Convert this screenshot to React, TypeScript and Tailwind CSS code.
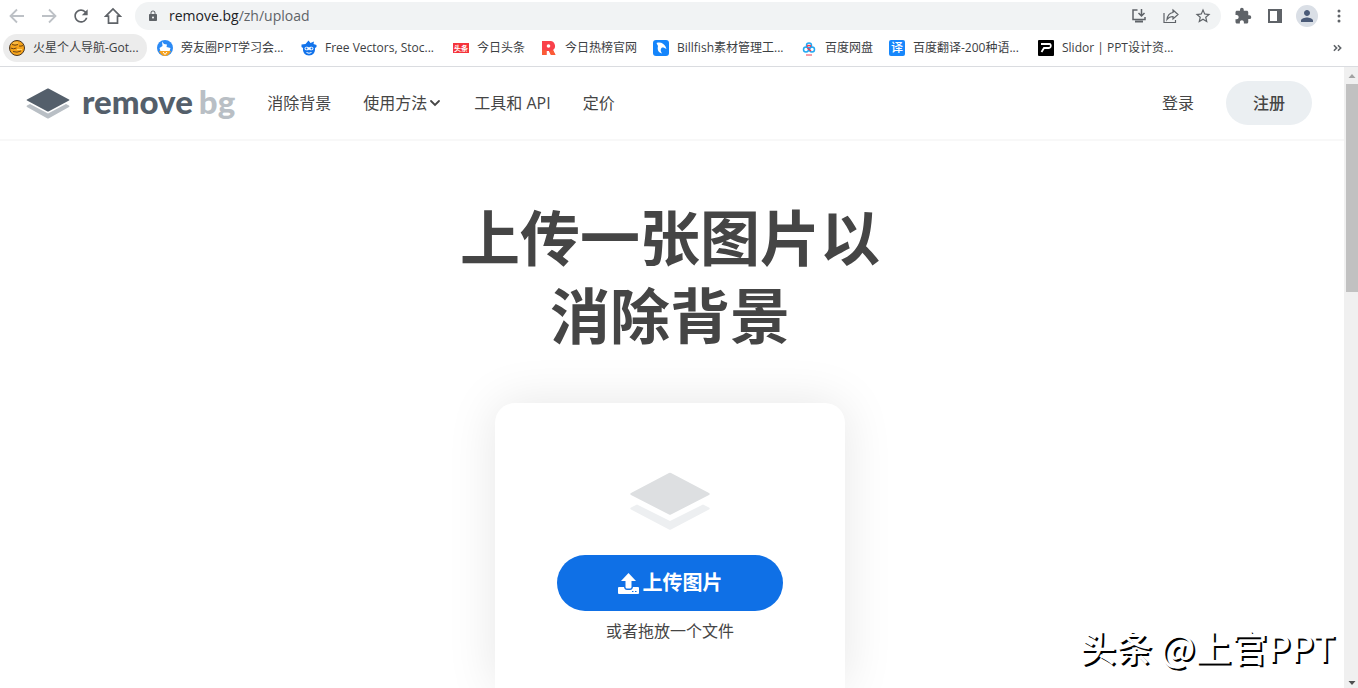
import React from 'react';
import { MdExtension, MdLock, MdPerson, MdRefresh, MdStarOutline } from 'react-icons/md';

interface Bookmark {
    title: string;
    width: string;
    active?: boolean;
    icon: React.ReactNode;
}

const bookmarks: Bookmark[] = [
    {
        title: '火星个人导航-Got...',
        width: 'w-[144px]',
        active: true,
        icon: (
            <>
                <circle cx="8" cy="8" r="7.5" fill="#f5a31b" stroke="#4a3621" strokeWidth="1" />
                <path d="M3 4.500q3 1.500 6 0M10 6q2 .5 4-.5M1.500 8q3 1.500 6 0M4 11.500q4 1.500 8-.5" stroke="#6b4312" strokeWidth="1" fill="none" />
                <path d="M4 3h5M8 9.500h5" stroke="#ffd36b" strokeWidth="1" />
            </>
        ),
    },
    {
        title: '旁友圈PPT学习会...',
        width: 'w-[140px]',
        icon: (
            <>
                <circle cx="8" cy="8" r="8" fill="#2b8af5" />
                <path d="M5 1.500l2 2.500 3 .5L9.500 7l4 1-1 3.500H3.500L2.500 8 5.500 6z" fill="#fff" />
                <path d="M2 11h12q-2 5-6 5t-6-5z" fill="#f6a11c" />
                <path d="M6 12l2 2.500 2-2.500" stroke="#fff" fill="none" />
            </>
        ),
    },
    {
        title: 'Free Vectors, Stoc...',
        width: 'w-[148px]',
        icon: (
            <>
                <path d="M.5 4.500l4-.5L7.500.5l2 2.500L13 1.500l-.5 2.500 3 1v2l-1.500 1c.5 4.500-2 7.500-6 7.500S1.500 12.500 2 8L.5 7z" fill="#1273eb" />
                <path d="M3.500 8.500c0-2 3.500-2.500 4.500-1 1-1.500 4.500-1 4.500 1s-3.500 2.500-4.500 1c-1 1.500-4.500 1-4.500-1z" fill="#fff" />
                <circle cx="5.500" cy="8.500" r="1" fill="#1273eb" />
                <circle cx="10.500" cy="8.500" r="1" fill="#1273eb" />
                <path d="M5.500 12.500q2.500 1.500 5 0" stroke="#fff" fill="none" />
            </>
        ),
    },
    {
        title: '今日头条',
        width: 'w-[84px]',
        icon: (
            <>
                <rect y="3" width="16" height="10" fill="#f5333b" />
                <text x="8" y="11" fill="#fff" fontSize="7" fontWeight="700" textAnchor="middle">头条</text>
            </>
        ),
    },
    {
        title: '今日热榜官网',
        width: 'w-[108px]',
        icon: (
            <>
                <path d="M1 1h8.500a5 5 0 0 1 2.500 9l2.500 5H10l-2-4H5.500v4H1z" fill="#f9414b" />
                <path d="M1 10h4.500v5H1zM8 11l4-1 2.500 5H10z" fill="#fb5b36" />
                <circle cx="7.500" cy="6" r="1.800" fill="#fff" />
            </>
        ),
    },
    {
        title: 'Billfish素材管理工...',
        width: 'w-[144px]',
        icon: (
            <>
                <rect width="16" height="16" rx="3" fill="#1585fb" />
                <path d="M3.500 3c4-1.500 7.500.5 9 3.500l1 2.500-3-1.500H9C7 9 7.500 11 9 13.500 5.500 12.500 4 10 5 6z" fill="#fff" />
            </>
        ),
    },
    {
        title: '百度网盘',
        width: 'w-[84px]',
        icon: (
            <>
                <circle cx="8" cy="5.500" r="2.500" fill="none" stroke="#22a7f2" strokeWidth="1.500" />
                <circle cx="5" cy="9.500" r="2.500" fill="none" stroke="#22a7f2" strokeWidth="1.500" />
                <circle cx="11" cy="9.500" r="2.500" fill="none" stroke="#22a7f2" strokeWidth="1.500" />
                <path d="M6 6.500a2.500 2.500 0 0 1 4 0M6.500 8l3.500 3" stroke="#ef3a4e" strokeWidth="1.500" fill="none" />
                <path d="M5 15h6" stroke="#ef3a4e" />
            </>
        ),
    },
    {
        title: '百度翻译-200种语...',
        width: 'w-[145px]',
        icon: (
            <>
                <rect width="16" height="16" rx="2" fill="#1787fb" />
                <text x="8" y="12" fill="#fff" fontSize="12" fontWeight="500" textAnchor="middle">译</text>
            </>
        ),
    },
    {
        title: 'Slidor | PPT设计资...',
        width: 'w-[148px]',
        icon: (
            <>
                <rect width="16" height="16" rx="1" fill="#000" />
                <path d="M3 4h8.500c2 0 1.500 4-.5 4H6l-2.500 4" stroke="#fff" strokeWidth="1.800" fill="none" />
            </>
        ),
    },
];

interface IconButtonProps {
    label: string;
    children: React.ReactNode;
}

const IconButton: React.FC<IconButtonProps> = ({ label, children }) => (
    <button aria-label={label} className="w-8 h-7 flex items-center justify-center shrink-0 text-[#5f6368]">
        {children}
    </button>
);

const Toolbar = () => (
    <div className="flex items-center pl-px pr-[3px] pt-0.5 h-[30px]">
        <IconButton label="后退">
            <svg width="16" height="16" viewBox="0 0 16 16" fill="none" stroke="#bdc1c6" strokeWidth="1.800">
                <path d="M15 8H2M8 1.500L1.500 8 8 14.500" />
            </svg>
        </IconButton>
        <IconButton label="前进">
            <svg width="16" height="16" viewBox="0 0 16 16" fill="none" stroke="#bdc1c6" strokeWidth="1.800">
                <path d="M1 8h13M8 1.500L14.500 8 8 14.500" />
            </svg>
        </IconButton>
        <IconButton label="重新加载"><MdRefresh className="w-5 h-5" /></IconButton>
        <IconButton label="主页">
            <svg width="18" height="18" viewBox="0 0 18 18" fill="none" stroke="currentColor" strokeWidth="1.700">
                <path d="M1.800 9.200L9 2l7.200 7.200h-2.700v7h-9v-7z" />
            </svg>
        </IconButton>
        <div className="flex-1 flex items-center h-7 ml-1.5 mr-1.5 pl-3 pr-0.5 rounded-full bg-[#f1f3f4]">
            <MdLock className="w-3 h-3.5 shrink-0 text-[#5f6368]" />
            <a href="#" className="flex-1 ml-2.5 text-sm text-[#5f6368]">
                <span className="text-[#202124]">remove.bg</span>/zh/upload
            </a>
            <IconButton label="安装">
                <svg width="16" height="16" viewBox="0 0 16 16" fill="none" stroke="currentColor" strokeWidth="1.500">
                    <path d="M6.500 2H2v9.500h12V9M10.500 1v6.500M7.500 5l3 3 3-3" />
                    <path d="M4 13.500h8" strokeWidth="2" />
                </svg>
            </IconButton>
            <IconButton label="分享">
                <svg width="16" height="16" viewBox="0 0 16 16" fill="none" stroke="currentColor" strokeWidth="1.200">
                    <path d="M1 5v9.500h11.500V12" />
                    <path d="M10 2l5 4.500L10 11V8.500c-3 0-4.500 1-6 3 .5-4 2.500-6.500 6-7z" />
                </svg>
            </IconButton>
            <IconButton label="收藏"><MdStarOutline className="w-[18px] h-[18px]" /></IconButton>
        </div>
        <IconButton label="扩展程序"><MdExtension className="w-[18px] h-[18px]" /></IconButton>
        <IconButton label="侧边栏">
            <svg width="14" height="14" viewBox="0 0 14 14">
                <path d="M0 0h14v14H0zM2 2v10h7V2z" fill="currentColor" fillRule="evenodd" />
            </svg>
        </IconButton>
        <IconButton label="个人资料">
            <span className="w-[22px] h-[22px] rounded-full bg-[#dadfe6] flex items-center justify-center text-[#4b5b78]">
                <MdPerson className="w-[18px] h-[18px]" />
            </span>
        </IconButton>
        <IconButton label="更多">
            <svg width="4" height="14" viewBox="0 0 4 14" fill="currentColor">
                <circle cx="2" cy="2" r="1.500" />
                <circle cx="2" cy="7" r="1.500" />
                <circle cx="2" cy="12" r="1.500" />
            </svg>
        </IconButton>
    </div>
);

const BookmarksBar = () => (
    <div className="flex items-center gap-1 h-[37px] pl-[3px] pr-4 border-b border-[#dadce0]">
        {bookmarks.map((b) => (
            <a
                key={b.title}
                href="#"
                className={`${b.width} ${b.active ? 'bg-[#ececec]' : ''} h-7 shrink-0 flex items-center gap-2 pl-1.5 rounded-full text-xs text-[#3c4043] whitespace-nowrap`}
            >
                <svg className="w-4 h-4 shrink-0" viewBox="0 0 16 16">{b.icon}</svg>
                {b.title}
            </a>
        ))}
        <button aria-label="更多书签" className="ml-auto text-[#5f6368]">
            <svg width="9" height="8" viewBox="0 0 10 8" fill="none" stroke="currentColor" strokeWidth="1.800">
                <path d="M1 1l3 3-3 3M5.500 1l3 3-3 3" />
            </svg>
        </button>
    </div>
);

const SiteHeader = () => (
    <header className="flex items-center h-[74px] pl-[26px] pr-8 border-b-2 border-[#f8f8f8] text-base text-[#454545]">
        <a href="#" aria-label="remove bg" className="flex items-center">
            <svg width="44" height="31" viewBox="0 0 44 31">
                <path d="M4 16L22 25.500 40 16l3 1.500q1 .5 0 1.500L22.500 30.500h-1L1 19q-1-1 0-1.500z" fill="#b9bfc5" />
                <path d="M21.500.5h1L43 11.500q1 .5 0 1L22.500 23.500h-1L1 12.500q-1-.5 0-1z" fill="#545f6b" />
            </svg>
            <span className="ml-3 font-[Lato] font-black text-[33px] leading-8 pb-1 text-[#545f6b]">remove</span>
            <span className="ml-1.5 font-[Lato] font-black text-[33px] leading-8 pb-1 text-[#b9bfc5]">bg</span>
        </a>
        <nav className="flex items-center gap-8 ml-8">
            <a href="#">消除背景</a>
            <button className="flex items-center gap-px">
                使用方法
                <svg width="14" height="8" viewBox="0 0 14 8" fill="none" stroke="currentColor" strokeWidth="1.800" strokeLinecap="round">
                    <path d="M3 2l4 4 4-4" />
                </svg>
            </button>
            <a href="#">工具和 API</a>
            <a href="#">定价</a>
        </nav>
        <div className="flex items-center gap-8 ml-auto">
            <a href="#">登录</a>
            <button className="h-11 w-[86px] rounded-full bg-[#ebeff2] font-medium">注册</button>
        </div>
    </header>
);

const UploadCard = () => (
    <section className="w-[350px] flex-1 flex flex-col items-center mt-12 pt-[69px] rounded-t-[20px] bg-white shadow-[0_0_50px_rgba(0,0,0,0.1)]">
        <svg width="80" height="58" viewBox="0 0 80 58">
            <path d="M39 1q1-.7 2 0l38 20q1.500 1 0 2L41 42.500q-1 .7-2 0L1 23q-1.500-1 0-2z" fill="#dddfe1" />
            <path d="M7 32.500L40 49l33-16.500 6 3q1.500 1 0 2L41 57.500q-1 .7-2 0L1 37.500q-1.500-1 0-2z" fill="#edeff1" />
        </svg>
        <button className="flex items-center justify-center gap-1 w-[226px] h-14 mt-[25px] rounded-full bg-[#0f70e6] text-white text-xl font-bold">
            <svg width="21" height="21" viewBox="0 0 21 21" fill="currentColor">
                <path d="M10.500 0L18 8h-4.500v6q0 1.500-1.500 1.500H9Q7.500 15.500 7.500 14V8H3z" />
                <path d="M1 14h5q.5 3 3 3h3q2.500 0 3-3h5q1 0 1 1v5q0 1-1 1H1q-1 0-1-1v-5q0-1 1-1zM14 18v1h1.500v-1zM17 18v1h1.500v-1z" fillRule="evenodd" />
            </svg>
            上传图片
        </button>
        <p className="mt-2 text-base text-[#454545]">或者拖放一个文件</p>
    </section>
);

const Scrollbar = () => (
    <div className="w-3.5 shrink-0 flex flex-col items-center bg-[#f0f0f0] pl-0.5">
        <svg width="12" height="17" viewBox="0 0 12 17"><path d="M2.500 11h7L6 7z" fill="#a3a3a3" /></svg>
        <div className="w-full flex-1">
            <div className="w-full h-52 bg-[#c1c1c1]" />
        </div>
        <svg width="12" height="17" viewBox="0 0 12 17"><path d="M2.500 10h7L6 14z" fill="#505050" /></svg>
    </div>
);

export default function App() {
    return (
        <div className="relative h-screen flex flex-col overflow-hidden bg-white font-['Open_Sans','Noto_Sans_CJK_SC',sans-serif]">
            <Toolbar />
            <BookmarksBar />
            <div className="flex-1 min-h-0 flex">
                <div className="flex-1 min-w-0 flex flex-col overflow-hidden">
                    <SiteHeader />
                    <main className="flex-1 flex flex-col items-center pt-[58px] pr-1">
                        <h1 className="text-[60px] leading-[78px] font-bold text-center text-[#454545]">
                            上传一张图片以
                            <br />
                            消除背景
                        </h1>
                        <UploadCard />
                    </main>
                </div>
                <Scrollbar />
            </div>
            {/* Author watermark over the page */}
            <div className="absolute right-[23px] bottom-4 text-4xl leading-[52px] font-medium text-white [text-shadow:2px_2px_0_#000] font-['Noto_Sans_CJK_SC',sans-serif]">
                头条 @上官PPT
            </div>
        </div>
    );
}
